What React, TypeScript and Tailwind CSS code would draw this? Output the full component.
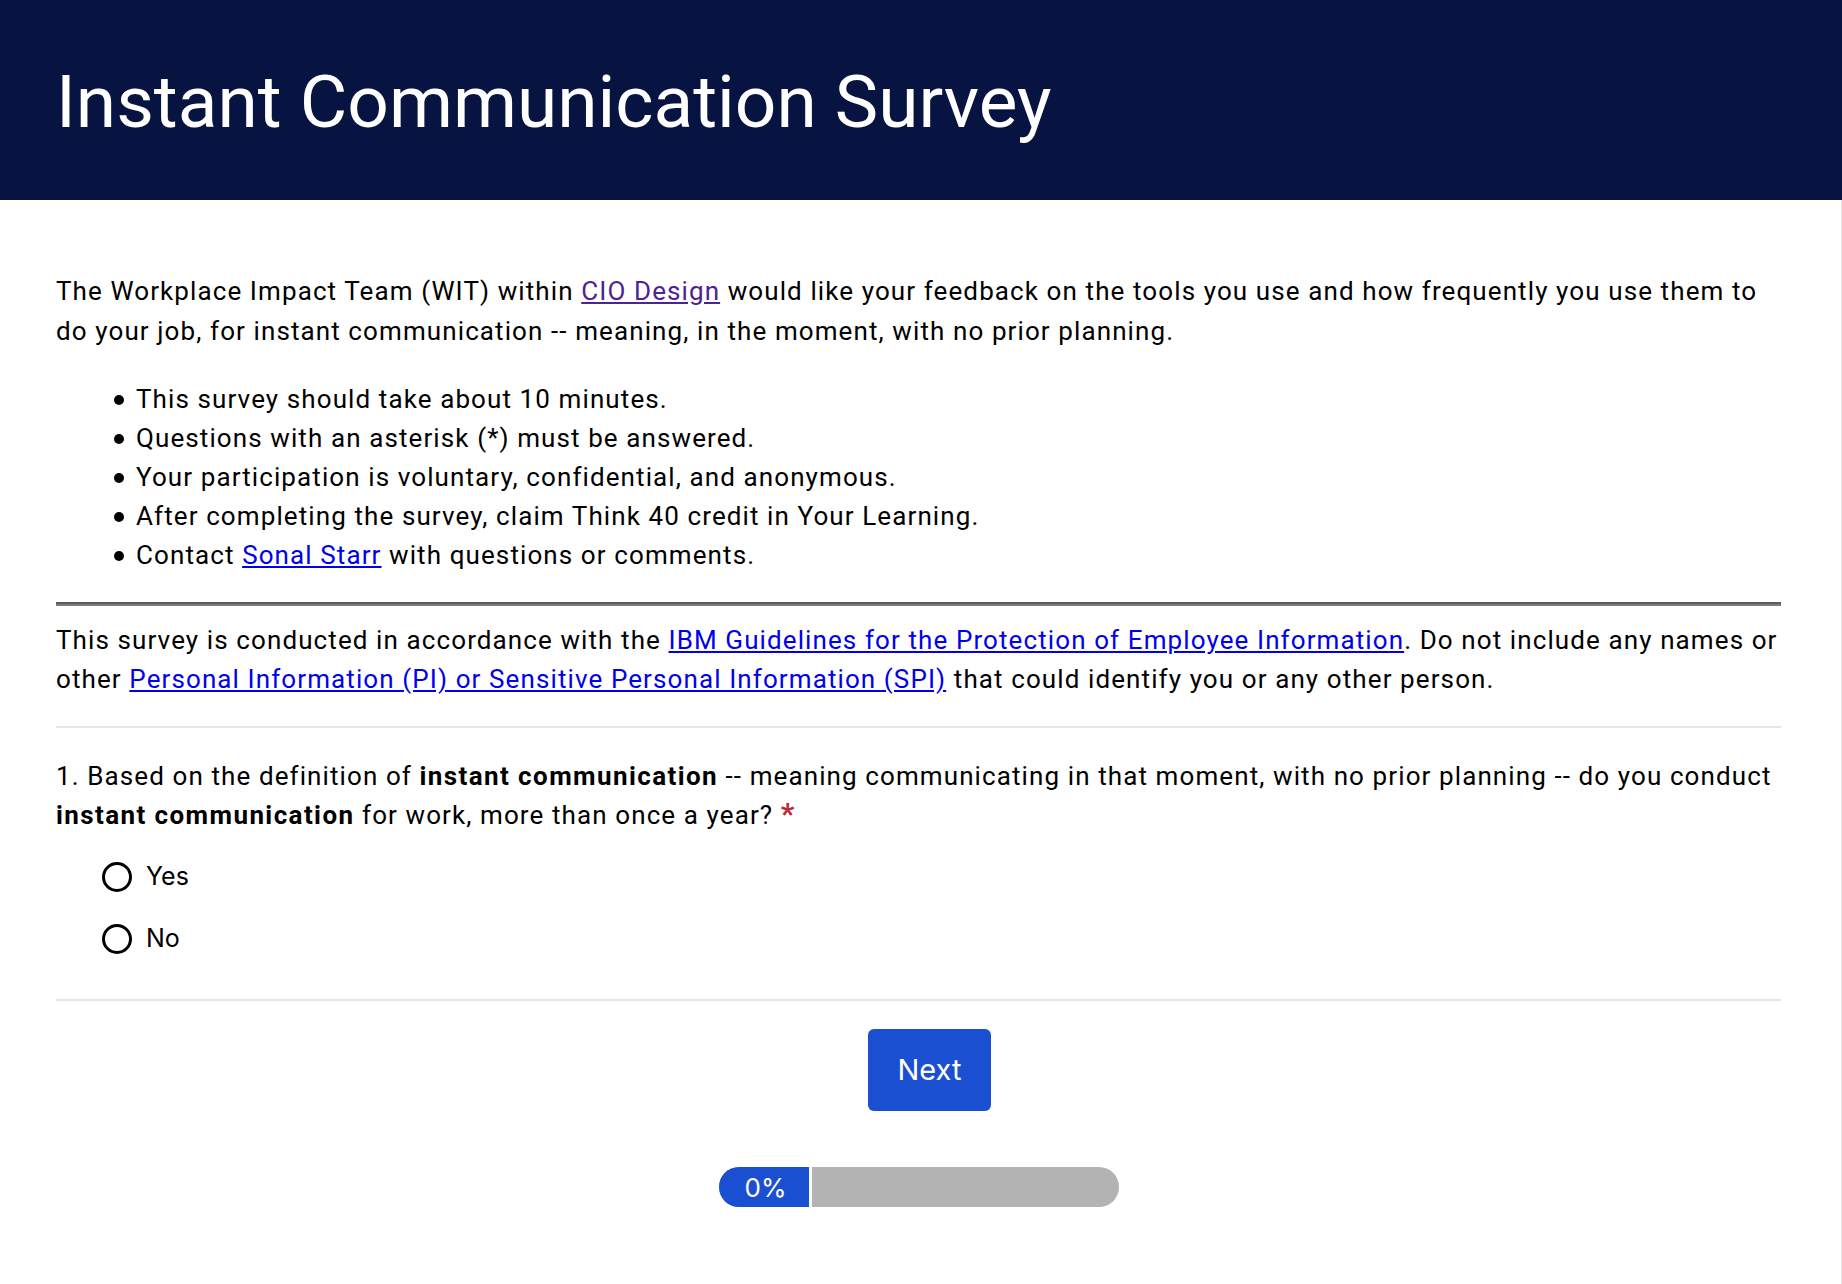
import React from "react";

const plex = { fontFamily: "Roboto, 'Noto Sans', sans-serif" };

function Bullet({ children }: { children: React.ReactNode }) {
  return (
    <li className="flex items-start">
      <span className="w-[56px] shrink-0 flex justify-center items-center h-[39px] pl-[22px]">
        <span className="w-[10px] h-[10px] rounded-full bg-black" />
      </span>
      <span>{children}</span>
    </li>
  );
}

export default function App() {
  return (
    <div className="min-h-[1284px] w-full bg-white text-black" style={plex}>
      <header className="h-[200px] w-full bg-[#071442] flex items-center pl-[56px]">
        <h1 className="text-[73px] leading-none text-white font-normal pt-[4px]">Instant Communication Survey</h1>
      </header>
      <main className="border-r border-[#e6e6e6] pl-[56px] pr-[60px] pt-[71px] min-h-[1084px] tracking-[1.1px]">
        <p className="text-[26px] leading-[40px]">
          The Workplace Impact Team (WIT) within{" "}
          <a href="#" className="underline text-[#4f2196]">CIO Design</a>{" "}
          would like your feedback on the tools you use and how frequently you use them to do your job, for
          instant communication -- meaning, in the moment, with no prior planning.
        </p>
        <ul className="mt-[29px] pl-[24px] text-[26px] leading-[39px]">
          <Bullet>This survey should take about 10 minutes.</Bullet>
          <Bullet>Questions with an asterisk (*) must be answered.</Bullet>
          <Bullet>Your participation is voluntary, confidential, and anonymous.</Bullet>
          <Bullet>After completing the survey, claim Think 40 credit in Your Learning.</Bullet>
          <Bullet>
            Contact <a href="#" className="underline text-[#0000ee]">Sonal Starr</a> with questions or comments.
          </Bullet>
        </ul>
        <div className="mt-[27px] h-[4px] border-t-[2px] border-b-[2px] border-t-[#5c5c5c] border-b-[#7c7c7c]" />
        <p className="mt-[15px] text-[26px] leading-[39px]">
          This survey is conducted in accordance with the{" "}
          <a href="#" className="underline text-[#0000ee]">IBM Guidelines for the Protection of Employee Information</a>. Do
          not include any names or other{" "}
          <a href="#" className="underline text-[#0000ee]">
            Personal Information (PI) or Sensitive Personal Information (SPI)
          </a>{" "}
          that could identify you or any other person.
        </p>
        <div className="mt-[27px] h-[2px] bg-[#e5e5e5]" />
        <p className="mt-[29px] text-[26px] leading-[39px]">
          1. Based on the definition of <b className="font-bold tracking-[1.4px]">instant communication</b> -- meaning
          communicating in that moment, with no prior planning -- do you conduct{" "}
          <b className="font-bold tracking-[1.4px]">instant communication</b> for work, more than once a year?{" "}
          <span className="text-[#c1272d] font-bold text-[30px] leading-none">*</span>
        </p>
        <div
          className="mt-[27px] pl-[46px] flex flex-col gap-[32px] tracking-normal"
          style={{ fontFamily: "Inter, sans-serif" }}
        >
          <label className="flex items-center gap-[14px] h-[30px]">
            <span className="w-[30px] h-[30px] rounded-full border-[3px] border-black" />
            <span className="text-[25px]">Yes</span>
          </label>
          <label className="flex items-center gap-[14px] h-[30px]">
            <span className="w-[30px] h-[30px] rounded-full border-[3px] border-black" />
            <span className="text-[25px]">No</span>
          </label>
        </div>
        <div className="mt-[45px] h-[2px] bg-[#e5e5e5]" />
        <div className="flex flex-col items-center tracking-normal" style={{ fontFamily: "Inter, sans-serif" }}>
          <button className="mt-[28px] ml-[22px] w-[123px] h-[82px] rounded-[6px] bg-[#1a4fd1] text-white text-[29px]">
            Next
          </button>
          <div className="mt-[56px] w-[400px] h-[40px] rounded-full bg-[#b3b3b3] overflow-hidden flex">
            <div className="w-[90px] h-full bg-[#1a4fd1] text-white text-[26px] flex items-center justify-center pl-[4px]">
              0%
            </div>
            <div className="w-[3px] h-full bg-white" />
          </div>
        </div>
      </main>
    </div>
  );
}
